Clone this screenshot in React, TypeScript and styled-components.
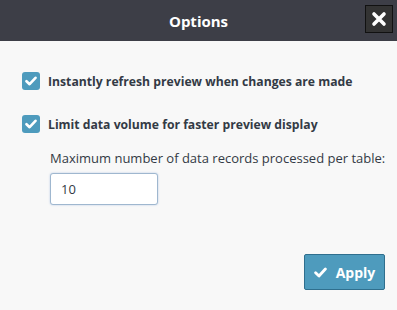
import React, { useState } from "react";
import styled, { createGlobalStyle } from "styled-components";

const GlobalStyle = createGlobalStyle`
  html, body {
    margin: 0;
    padding: 0;
    background: #f8f8f8;
    font-family: "Open Sans", "Noto Sans", sans-serif;
  }
`;

const Dialog = styled.div`
  width: 397px;
  height: 310px;
  display: flex;
  flex-direction: column;
  background: #f8f8f8;
`;

const Header = styled.div`
  position: relative;
  height: 41px;
  background: #3d3e47;
  display: flex;
  align-items: center;
  justify-content: center;
  color: #fff;
  font-weight: 700;
  font-size: 15px;
`;

const CloseButton = styled.button`
  position: absolute;
  top: 5px;
  right: 4px;
  width: 28px;
  height: 28px;
  padding: 0;
  background: #333333;
  border: 1px solid #111;
  display: flex;
  align-items: center;
  justify-content: center;
  cursor: pointer;
`;

const Body = styled.div`
  flex: 1;
  display: flex;
  flex-direction: column;
  padding: 31px 0 0 22px;
`;

const CheckRow = styled.label`
  display: flex;
  align-items: center;
  gap: 8px;
  height: 18px;
  margin-bottom: 25px;
  font-size: 12.2px;
  font-weight: 700;
  color: #333a45;
  cursor: pointer;
`;

const Box = styled.span<{ $checked: boolean }>`
  width: 18px;
  height: 18px;
  border-radius: 3px;
  background: ${(p) => (p.$checked ? "#4e9bbd" : "#fff")};
  display: flex;
  align-items: center;
  justify-content: center;
  flex: none;
`;

const SubSection = styled.div`
  display: flex;
  flex-direction: column;
  padding-left: 28px;
  margin-top: -9px;
`;

const FieldLabel = styled.div`
  font-size: 13px;
  color: #333a45;
  margin-bottom: 6px;
`;

const NumberInput = styled.input`
  box-sizing: border-box;
  width: 108px;
  height: 32px;
  border: 1px solid #9fb7cf;
  border-radius: 3px;
  background: #fff;
  padding: 0 10px;
  font-family: inherit;
  font-size: 13px;
  color: #333a45;
  box-shadow: 0 0 2px rgba(80, 130, 200, 0.4);
  outline: none;
`;

const Footer = styled.div`
  display: flex;
  justify-content: flex-end;
  padding: 0 12px 20px 0;
`;

const ApplyButton = styled.button`
  box-sizing: border-box;
  width: 81px;
  height: 36px;
  background: #4e9bbd;
  border: 1px solid #2f6f8e;
  border-radius: 2px;
  color: #fff;
  font-family: inherit;
  font-weight: 700;
  font-size: 14px;
  display: flex;
  align-items: center;
  justify-content: center;
  gap: 9px;
  cursor: pointer;
`;

const Check = ({ size = 12 }: { size?: number }) => (
  <svg width={size} height={size} viewBox="0 0 12 12">
    <path
      d="M1.5 6.2 L4.6 9.2 L10.5 2.8"
      fill="none"
      stroke="#fff"
      strokeWidth={2.6}
      strokeLinecap="round"
      strokeLinejoin="round"
    />
  </svg>
);

const CheckOption = ({
  label,
  checked,
  onToggle,
}: {
  label: string;
  checked: boolean;
  onToggle: () => void;
}) => (
  <CheckRow onClick={onToggle}>
    <Box $checked={checked}>{checked && <Check />}</Box>
    {label}
  </CheckRow>
);

const App: React.FC = () => {
  const [refresh, setRefresh] = useState(true);
  const [limit, setLimit] = useState(true);
  const [max, setMax] = useState("10");

  return (
    <Dialog>
      <GlobalStyle />
      <Header>
        Options
        <CloseButton aria-label="Close">
          <svg width="16" height="16" viewBox="0 0 16 16">
            <path
              d="M3 3 L13 13 M13 3 L3 13"
              stroke="#fff"
              strokeWidth={3.6}
              strokeLinecap="round"
            />
          </svg>
        </CloseButton>
      </Header>
      <Body>
        <CheckOption
          label="Instantly refresh preview when changes are made"
          checked={refresh}
          onToggle={() => setRefresh(!refresh)}
        />
        <CheckOption
          label="Limit data volume for faster preview display"
          checked={limit}
          onToggle={() => setLimit(!limit)}
        />
        <SubSection>
          <FieldLabel>Maximum number of data records processed per table:</FieldLabel>
          <NumberInput value={max} onChange={(e) => setMax(e.target.value)} />
        </SubSection>
      </Body>
      <Footer>
        <ApplyButton>
          <Check size={13} />
          Apply
        </ApplyButton>
      </Footer>
    </Dialog>
  );
};

export default App;
